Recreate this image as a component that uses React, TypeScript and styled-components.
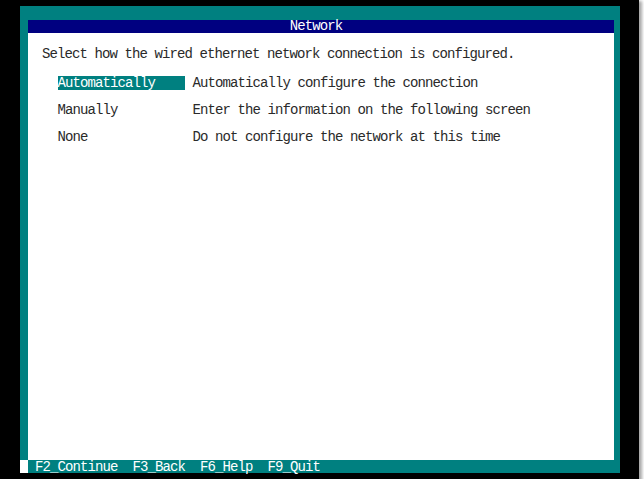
import styled, { createGlobalStyle } from "styled-components";

const GlobalStyle = createGlobalStyle`
  html, body {
    margin: 0;
    padding: 0;
    background: #ffffff;
  }
`;

const Screen = styled.div`
  width: 639px;
  height: 479px;
  background: #000;
  box-shadow: 2px 2px 3px 1px rgba(0, 0, 0, 0.35);
  padding: 6px 0 0 20px;
  box-sizing: border-box;
  font-family: "Liberation Mono", "DejaVu Sans Mono", monospace;
  font-size: 14px;
  letter-spacing: -0.9px;
`;

const Frame = styled.div`
  width: 600px;
  height: 467px;
  background: #008080;
  display: flex;
  flex-direction: column;
  box-sizing: border-box;
  padding-top: 14px;
`;

const Panel = styled.div`
  flex: 1;
  margin: 0 6px 0 8px;
  background: #fff;
  display: flex;
  flex-direction: column;
  color: #2a2a2a;
`;

const TitleBar = styled.div`
  height: 13px;
  line-height: 13px;
  background: #000080;
  color: #fff;
  text-align: center;
  padding-right: 10px;
`;

const Prompt = styled.div`
  margin-top: 14px;
  height: 14px;
  line-height: 14px;
  padding-left: 14px;
  white-space: pre;
`;

const OptionList = styled.div`
  margin-top: 15px;
  display: flex;
  flex-direction: column;
  gap: 14px;
  padding-left: 29.5px;
`;

const OptionRow = styled.div`
  display: grid;
  grid-template-columns: 127.5px 1fr;
  column-gap: 7.5px;
  height: 13px;
  line-height: 14px;
  white-space: pre;
`;

const OptionLabel = styled.div<{ $selected?: boolean }>`
  background: ${(p) => (p.$selected ? "#008080" : "transparent")};
  color: ${(p) => (p.$selected ? "#fff" : "inherit")};
`;

const Footer = styled.div`
  height: 13px;
  display: flex;
  align-items: stretch;
  color: #fff;
  line-height: 14px;
`;

const Cursor = styled.div`
  width: 8px;
  background: #fff;
`;

const FooterKeys = styled.div`
  padding-left: 7px;
  white-space: pre;
`;

const options = [
  { label: "Automatically", desc: "Automatically configure the connection", selected: true },
  { label: "Manually", desc: "Enter the information on the following screen" },
  { label: "None", desc: "Do not configure the network at this time" },
];

export default function App() {
  return (
    <>
      <GlobalStyle />
      <Screen>
        <Frame>
          <Panel>
            <TitleBar>Network</TitleBar>
            <Prompt>Select how the wired ethernet network connection is configured.</Prompt>
            <OptionList>
              {options.map((o) => (
                <OptionRow key={o.label}>
                  <OptionLabel $selected={o.selected}>{o.label}</OptionLabel>
                  <div>{o.desc}</div>
                </OptionRow>
              ))}
            </OptionList>
          </Panel>
          <Footer>
            <Cursor />
            <FooterKeys>F2_Continue  F3_Back  F6_Help  F9_Quit</FooterKeys>
          </Footer>
        </Frame>
      </Screen>
    </>
  );
}
